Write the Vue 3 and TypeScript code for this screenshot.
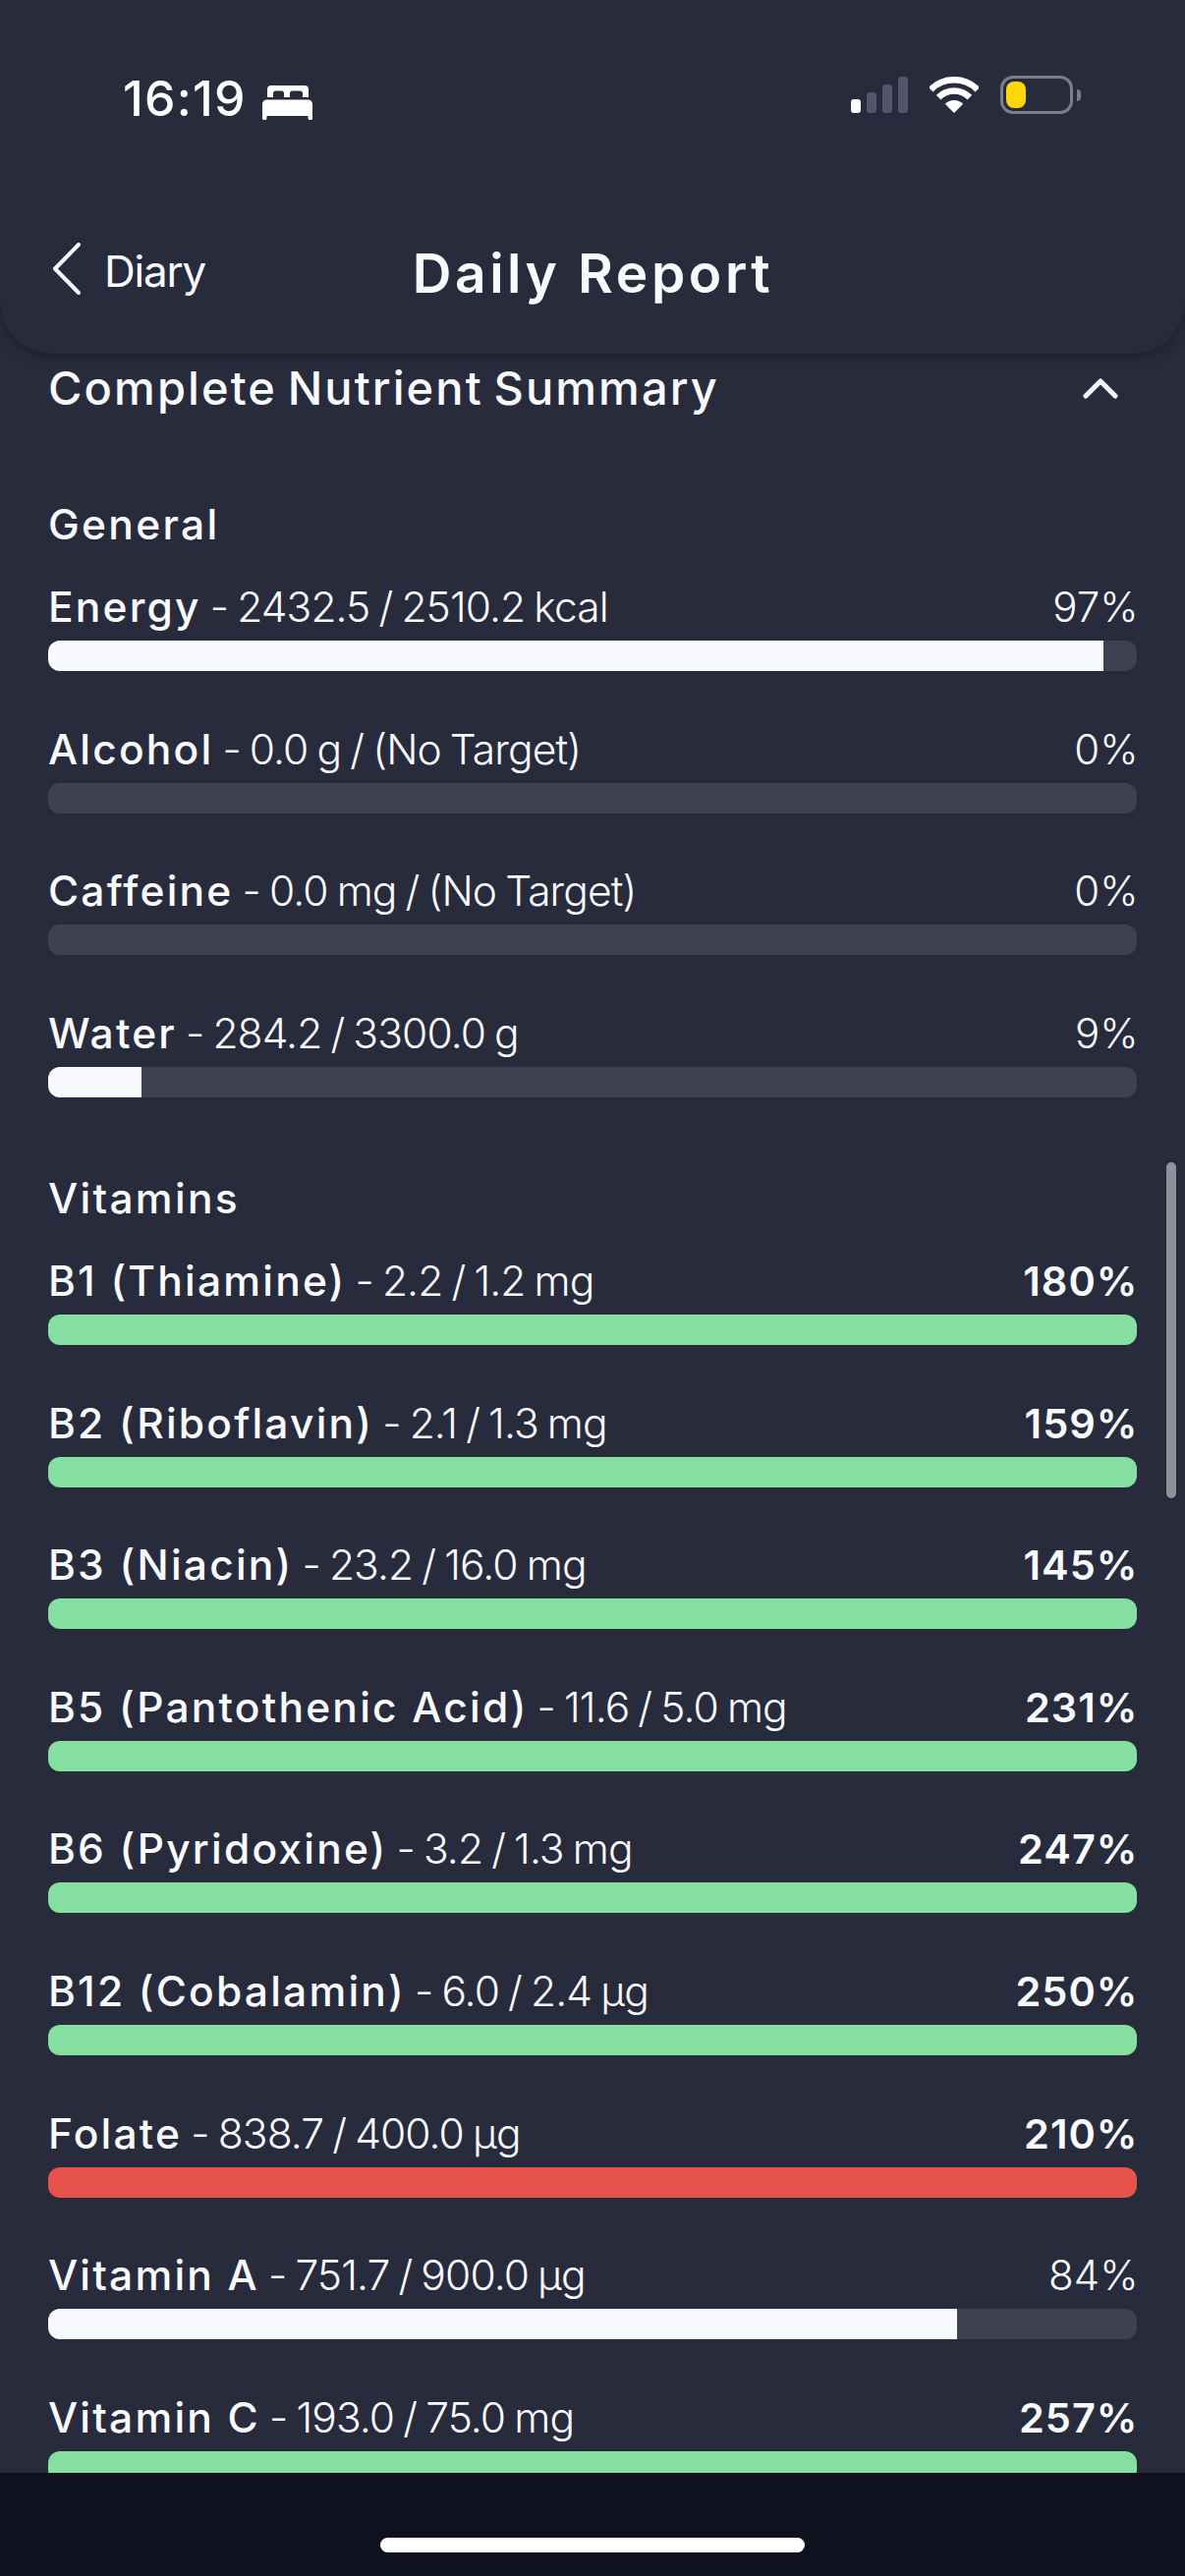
<script setup lang="ts">
interface Row {
  name: string
  detail: string
  pct: string
  fill: number
  tone: 'white' | 'green' | 'red'
}
interface Group {
  title: string
  rows: Row[]
}

const groups: Group[] = [
  {
    title: 'General',
    rows: [
      { name: 'Energy', detail: ' - 2432.5 / 2510.2 kcal', pct: '97%', fill: 96.9, tone: 'white' },
      { name: 'Alcohol', detail: ' - 0.0 g / (No Target)', pct: '0%', fill: 0, tone: 'white' },
      { name: 'Caffeine', detail: ' - 0.0 mg / (No Target)', pct: '0%', fill: 0, tone: 'white' },
      { name: 'Water', detail: ' - 284.2 / 3300.0 g', pct: '9%', fill: 8.6, tone: 'white' }
    ]
  },
  {
    title: 'Vitamins',
    rows: [
      { name: 'B1 (Thiamine)', detail: ' - 2.2 / 1.2 mg', pct: '180%', fill: 100, tone: 'green' },
      { name: 'B2 (Riboflavin)', detail: ' - 2.1 / 1.3 mg', pct: '159%', fill: 100, tone: 'green' },
      { name: 'B3 (Niacin)', detail: ' - 23.2 / 16.0 mg', pct: '145%', fill: 100, tone: 'green' },
      { name: 'B5 (Pantothenic Acid)', detail: ' - 11.6 / 5.0 mg', pct: '231%', fill: 100, tone: 'green' },
      { name: 'B6 (Pyridoxine)', detail: ' - 3.2 / 1.3 mg', pct: '247%', fill: 100, tone: 'green' },
      { name: 'B12 (Cobalamin)', detail: ' - 6.0 / 2.4 µg', pct: '250%', fill: 100, tone: 'green' },
      { name: 'Folate', detail: ' - 838.7 / 400.0 µg', pct: '210%', fill: 100, tone: 'red' },
      { name: 'Vitamin A', detail: ' - 751.7 / 900.0 µg', pct: '84%', fill: 83.5, tone: 'white' },
      { name: 'Vitamin C', detail: ' - 193.0 / 75.0 mg', pct: '257%', fill: 100, tone: 'green' }
    ]
  }
]
</script>

<template>
  <div class="screen">
    <header class="top">
      <div class="status">
        <div class="status-left">
          <span class="time">16:19</span>
          <svg class="bed" viewBox="0 0 51 35" width="51" height="35">
            <path fill="#fff" d="M9 0h34a4 4 0 0 1 4 4v8h-6V8a2.500 2.500 0 0 0-2.500-2.500h-8A2.500 2.500 0 0 0 28 8v4h-6V8a2.500 2.500 0 0 0-2.500-2.500h-6A2.500 2.500 0 0 0 11 8v4H5V4a4 4 0 0 1 4-4Z" />
            <path fill="#fff" d="M4.500 14.500h42A4.500 4.500 0 0 1 51 19v14.500a1.500 1.500 0 0 1-1.500 1.500H48a1.500 1.500 0 0 1-1.500-1.500V31h-42v2.500A1.500 1.500 0 0 1 3 35H1.500A1.500 1.500 0 0 1 0 33.500V19a4.500 4.500 0 0 1 4.500-4.500Z" />
          </svg>
        </div>
        <div class="status-right">
          <div class="signal">
            <i class="s1"></i><i class="s2"></i><i class="s3"></i><i class="s4"></i>
          </div>
          <svg class="wifi" viewBox="0 0 50 37" width="50" height="37">
            <path fill="#fff" d="M25 37 15.800 27.800A13 13 0 0 1 34.200 27.800Z" />
            <path fill="none" stroke="#fff" stroke-width="6.500" d="M9.100 21.100A22.500 22.500 0 0 1 40.900 21.100" />
            <path fill="none" stroke="#fff" stroke-width="6.500" d="M1.200 13.200A33.700 33.700 0 0 1 48.800 13.200" />
          </svg>
          <div class="battery">
            <div class="cell"><span class="charge"></span></div>
            <span class="nub"></span>
          </div>
        </div>
      </div>
      <div class="nav">
        <div class="back">
          <svg class="chev" viewBox="0 0 30 53" width="30" height="53">
            <path d="M27 2 3 26.500 27 51" fill="none" stroke="#f9fafe" stroke-width="4" stroke-linecap="round" stroke-linejoin="round" />
          </svg>
          <span class="back-label">Diary</span>
        </div>
        <h1 class="title">Daily Report</h1>
      </div>
    </header>

    <main class="content">
      <div class="summary">
        <h2 class="summary-title">Complete Nutrient Summary</h2>
        <svg class="caret" viewBox="0 0 36 22" width="36" height="22">
          <path d="M3 19 18 4l15 15" fill="none" stroke="#f9fafe" stroke-width="5" stroke-linecap="round" stroke-linejoin="round" />
        </svg>
      </div>

      <section v-for="g in groups" :key="g.title" class="group">
        <h3 class="group-title">{{ g.title }}</h3>
        <div v-for="r in g.rows" :key="r.name" class="row">
          <div class="label">
            <span class="text"><span class="name">{{ r.name }}</span><span class="detail">{{ r.detail }}</span></span>
            <span class="pct" :class="{ strong: r.tone !== 'white' }">{{ r.pct }}</span>
          </div>
          <div class="track">
            <div class="fill" :class="r.tone" :style="{ width: r.fill + '%' }"></div>
          </div>
        </div>
      </section>

      <div class="scrollbar"></div>
    </main>

    <footer class="bottom">
      <span class="home"></span>
    </footer>
  </div>
</template>

<style>
html, body {
  margin: 0;
  background: #282b3c;
}
</style>

<style scoped>
.screen {
  width: 1206px;
  height: 2622px;
  display: flex;
  flex-direction: column;
  overflow: hidden;
  background: #282b3c;
  color: #f9fafe;
  font-family: Inter, "Liberation Sans", sans-serif;
  position: relative;
}
.top {
  height: 360px;
  flex: none;
  box-sizing: border-box;
  background: #282b3c;
  border-radius: 0 0 54px 54px;
  box-shadow: 0 4px 12px rgba(10, 12, 26, 0.32);
  position: relative;
  z-index: 2;
  padding: 76px 0 0;
}
.status {
  display: flex;
  justify-content: space-between;
  align-items: flex-start;
  padding: 0 106px 0 125px;
  height: 44px;
}
.status-left {
  display: flex;
  align-items: center;
  gap: 16px;
}
.time {
  font-size: 50px;
  font-weight: 500;
  line-height: 44px;
  letter-spacing: 1.2px;
  color: #fff;
  padding-top: 2px;
}
.bed {
  display: block;
  margin-top: 10px;
}
.status-right {
  display: flex;
  align-items: flex-start;
  gap: 22px;
  padding-top: 2px;
}
.signal {
  display: flex;
  align-items: flex-end;
  gap: 6px;
  height: 37px;
}
.signal i {
  display: block;
  width: 10px;
  border-radius: 3px;
  background: #52566a;
}
.signal .s1 {
  height: 14px;
  background: #fff;
}
.signal .s2 {
  height: 21px;
}
.signal .s3 {
  height: 29px;
}
.signal .s4 {
  height: 37px;
}
.wifi {
  display: block;
}
.battery {
  display: flex;
  align-items: center;
  gap: 4px;
  margin-top: -1px;
}
.cell {
  width: 74px;
  height: 39px;
  box-sizing: border-box;
  border: 3px solid #7b7d88;
  border-radius: 13px;
  padding: 3px;
  display: flex;
}
.charge {
  width: 20px;
  border-radius: 8px;
  background: #ffd60a;
}
.nub {
  width: 4px;
  height: 12px;
  border-radius: 0 6px 6px 0;
  background: #7b7d88;
}
.nav {
  position: relative;
  display: flex;
  justify-content: center;
  align-items: center;
  height: 76px;
  margin-top: 120px;
}
.back {
  position: absolute;
  left: 53px;
  top: 6px;
  display: flex;
  align-items: center;
  gap: 23px;
}
.chev {
  display: block;
}
.back-label {
  font-size: 44px;
  font-weight: 400;
  letter-spacing: -1.2px;
  line-height: 50px;
  margin-top: 5px;
}
.title {
  margin: 0 0 0 1px;
  font-size: 55px;
  font-weight: 620;
  letter-spacing: 3.6px;
  line-height: 76px;
}
.content {
  flex: 1;
  min-height: 0;
  position: relative;
  overflow: hidden;
  padding: 0 49px;
}
.summary {
  display: flex;
  justify-content: space-between;
  align-items: center;
  height: 70px;
  padding-right: 19px;
}
.summary-title {
  margin: 0;
  font-size: 47px;
  font-weight: 500;
  line-height: 70px;
  letter-spacing: 2.1px;
  word-spacing: -4px;
}
.caret {
  display: block;
}
.group {
  margin-top: 78px;
}
.group + .group {
  margin-top: 23.6px;
}
.group-title {
  margin: 0;
  padding: 1px 0 33px;
  font-size: 42.5px;
  font-weight: 500;
  letter-spacing: 2.3px;
  line-height: 50px;
}
.row {
  padding-bottom: 53.6px;
}
.label {
  display: flex;
  justify-content: space-between;
  align-items: baseline;
  height: 52px;
  line-height: 52px;
  margin-bottom: 8px;
  font-size: 42.5px;
}
.name {
  font-weight: 530;
  letter-spacing: 2.2px;
}
.detail {
  font-weight: 280;
  letter-spacing: -0.9px;
  word-spacing: -2px;
  white-space: pre;
}
.pct {
  font-weight: 280;
  font-size: 42px;
  margin-right: -1.5px;
}
.pct.strong {
  font-weight: 600;
  font-size: 41.5px;
  letter-spacing: 1px;
}
.track {
  height: 31px;
  border-radius: 12px;
  background: #3f4150;
  overflow: hidden;
}
.fill {
  height: 100%;
}
.fill.white {
  background: #f9fafe;
}
.fill.green {
  background: #85dfa0;
}
.fill.red {
  background: #e5534b;
}
.scrollbar {
  position: absolute;
  top: 823px;
  right: 9px;
  width: 10px;
  height: 342px;
  border-radius: 5px;
  background: #8f919b;
}
.bottom {
  flex: none;
  height: 105px;
  background: #10111f;
  display: flex;
  justify-content: center;
  position: relative;
  z-index: 1;
}
.home {
  width: 432px;
  height: 15px;
  margin-top: 66px;
  border-radius: 8px;
  background: #fff;
}
</style>
